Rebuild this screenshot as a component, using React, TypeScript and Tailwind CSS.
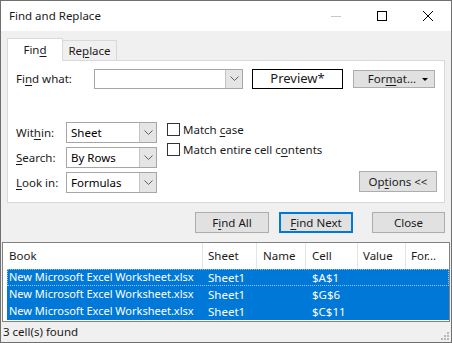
import React from "react";

const U = ({ children }: { children: React.ReactNode }) => (
  <span className="underline underline-offset-[2px] decoration-[1px]">{children}</span>
);

const Chevron = () => (
  <svg width="9" height="6" viewBox="0 0 9 6" className="block">
    <polyline points="0.5,0.5 4.5,4.5 8.5,0.5" fill="none" stroke="#606060" strokeWidth="1" />
  </svg>
);

const Combo = ({ w, h, text, arrowW }: { w: string; h: string; text?: string; arrowW: string }) => (
  <div className={`${w} ${h} flex border border-[#a6a6a6] bg-white`}>
    <div className="flex-1 flex items-center pl-[4px] text-black">{text}</div>
    <div className={`${arrowW} flex items-center justify-center bg-[#e5e5e5] border-l border-[#c4c4c4]`}>
      <Chevron />
    </div>
  </div>
);

const Btn = ({ className, children }: { className: string; children: React.ReactNode }) => (
  <div className={`flex items-center justify-center bg-[#e1e1e1] border border-[#adadad] ${className}`}>{children}</div>
);

const Check = ({ children }: { children: React.ReactNode }) => (
  <div className="flex items-center h-[13px]">
    <div className="w-[13px] h-[13px] border border-[#333333] bg-white" />
    <div className="ml-[3px] leading-none">{children}</div>
  </div>
);

export default function App() {
  const rows = ["$A$1", "$G$6", "$C$11"];
  return (
    <div
      className="w-[452px] h-[343px] border border-[#707070] bg-[#f0f0f0] flex flex-col text-[11.5px] text-[#1a1a1a] overflow-hidden"
      style={{ fontFamily: '"Noto Sans", "Segoe UI", sans-serif' }}
    >
      {/* Title bar */}
      <div className="h-[30px] bg-white flex items-center shrink-0">
        <div className="pl-[8px] flex-1 text-[11.5px]">Find and Replace</div>
        <div className="w-[46px] h-[30px] flex items-center justify-center">
          <div className="w-[10px] h-[1px] bg-[#c8c8c8]" />
        </div>
        <div className="w-[46px] h-[30px] flex items-center justify-center">
          <div className="w-[10px] h-[10px] border border-black" />
        </div>
        <div className="w-[46px] h-[30px] flex items-center justify-center">
          <svg width="10" height="10" viewBox="0 0 10 10">
            <path d="M0,0 L10,10 M10,0 L0,10" stroke="#000" strokeWidth="1" />
          </svg>
        </div>
      </div>

      {/* Body */}
      <div className="px-[6px] flex flex-col">
        {/* Tabs */}
        <div className="mt-[7px] flex items-end">
          <div className="relative z-10 w-[56px] h-[23px] -mb-[1px] bg-white border border-b-0 border-[#d9d9d9] flex items-center justify-center pb-[1px]">
            Fin<U>d</U>
          </div>
          <div className="w-[54px] h-[20px] bg-[#f0f0f0] border border-l-0 border-b-0 border-[#d9d9d9] flex items-center justify-center">
            Re<U>p</U>lace
          </div>
        </div>

        {/* Panel */}
        <div className="h-[143px] bg-white border border-[#d9d9d9] pt-[8px] pl-[8px] pr-[7px] flex flex-col">
          <div className="flex items-center h-[20px]">
            <div className="w-[78px]">
              Fi<U>n</U>d what:
            </div>
            <Combo w="w-[149px]" h="h-[20px]" arrowW="w-[17px]" />
            <div className="ml-[9px] w-[91px] h-[20px] border border-black flex items-center justify-center text-[13px]">
              Preview*
            </div>
            <Btn className="ml-[10px] w-[82px] h-[18px] relative">
              <span className="-ml-[4px]">
                For<U>m</U>at...
              </span>
              <span className="absolute right-[6px] top-[7px] w-0 h-0 border-l-[3px] border-r-[3px] border-t-[3px] border-l-transparent border-r-transparent border-t-black" />
            </Btn>
          </div>

          <div className="mt-[33px] flex">
            <div className="flex flex-col gap-[4px]">
              {[
                [<>Wit<U>h</U>in:</>, "Sheet"],
                [<><U>S</U>earch:</>, "By Rows"],
                [<><U>L</U>ook in:</>, "Formulas"],
              ].map(([label, val], i) => (
                <div key={i} className="flex items-center h-[21px]">
                  <div className="w-[50px]">{label}</div>
                  <Combo w="w-[91px]" h="h-[21px]" text={val as string} arrowW="w-[17px]" />
                </div>
              ))}
            </div>
            <div className="ml-[10px] pt-[1px] flex flex-col gap-[7px]">
              <Check>
                Match <U>c</U>ase
              </Check>
              <Check>
                Match entire cell c<U>o</U>ntents
              </Check>
            </div>
            <div className="ml-auto self-end mb-[1px]">
              <Btn className="w-[78px] h-[21px]">
                Op<U>t</U>ions &lt;&lt;
              </Btn>
            </div>
          </div>
        </div>

        {/* Buttons */}
        <div className="mt-[9px] flex justify-end">
          <Btn className="w-[74px] h-[21px]">
            F<U>i</U>nd All
          </Btn>
          <div className="ml-[10px] w-[74px] h-[21px] flex items-center justify-center bg-[#e1e1e1] border-2 border-[#0078d7]">
            <U>F</U>ind Next
          </div>
          <Btn className="ml-[19px] w-[73px] h-[21px]">Close</Btn>
        </div>
      </div>

      {/* List */}
      <div className="mt-[9px] mx-[1px] h-[80px] border border-[#828282] bg-white flex flex-col shrink-0">
        <div className="h-[26px] flex shrink-0">
          <div className="w-[200px] border-r border-[#e5e5e5] pl-[6px] flex items-center">Book</div>
          <div className="w-[54px] border-r border-[#e5e5e5] pl-[5px] flex items-center">Sheet</div>
          <div className="w-[49px] border-r border-[#e5e5e5] pl-[6px] flex items-center">Name</div>
          <div className="w-[52px] border-r border-[#e5e5e5] pl-[6px] flex items-center">Cell</div>
          <div className="w-[48px] border-r border-[#e5e5e5] pl-[5px] flex items-center">Value</div>
          <div className="flex-1 pl-[5px] flex items-center">For...</div>
        </div>
        {rows.map((c, i) => (
          <div
            key={c}
            className={`ml-[4px] h-[17px] flex bg-[#0078d7] text-white ${
              i === 0 ? "outline outline-1 outline-dotted outline-[#9cc8ee] -outline-offset-1" : ""
            }`}
          >
            <div className="w-[196px] pl-[2px] flex items-center whitespace-nowrap text-[11px]">New Microsoft Excel Worksheet.xlsx</div>
            <div className="w-[54px] pl-[5px] flex items-center">Sheet1</div>
            <div className="w-[49px]" />
            <div className="w-[52px] pl-[6px] flex items-center">{c}</div>
            <div className="flex-1" />
          </div>
        ))}
      </div>

      {/* Status */}
      <div className="flex-1 flex items-center pl-[2px] relative">
        3 cell(s) found
        <svg className="absolute right-[2px] bottom-[2px]" width="10" height="10" viewBox="0 0 10 10">
          {[
            [8, 2],
            [5, 5],
            [8, 5],
            [2, 8],
            [5, 8],
            [8, 8],
          ].map(([x, y], i) => (
            <rect key={i} x={x} y={y} width="2" height="2" fill="#b8b8b8" />
          ))}
        </svg>
      </div>
    </div>
  );
}
